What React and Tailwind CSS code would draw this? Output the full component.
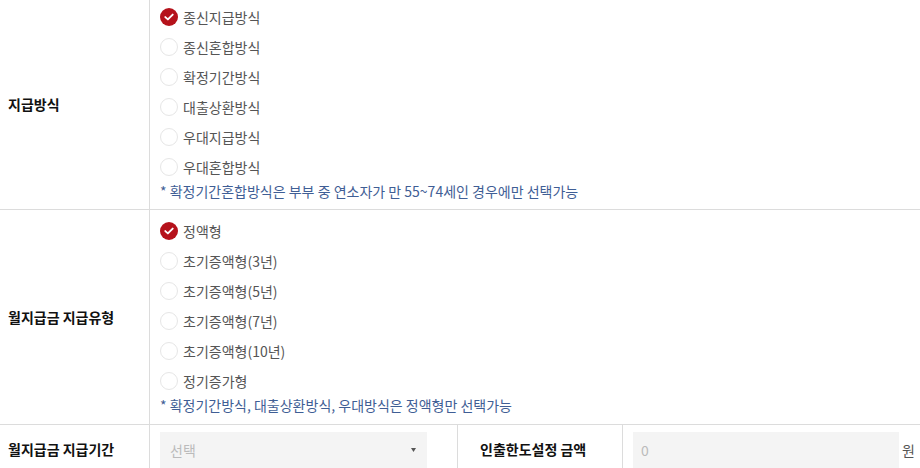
import React from 'react';

// ── Form: 지급방식 / 월지급금 ─────────────────────────────────────────────
const FONT = { fontFamily: '"Noto Sans CJK KR", "Noto Sans", sans-serif' };

const METHODS = ['종신지급방식', '종신혼합방식', '확정기간방식', '대출상환방식', '우대지급방식', '우대혼합방식'];
const TYPES = ['정액형', '초기증액형(3년)', '초기증액형(5년)', '초기증액형(7년)', '초기증액형(10년)', '정기증가형'];

function Radio({ label, checked }) {
  return (
    <label className="flex h-[30px] items-center gap-[5px] cursor-pointer">
      {checked ? (
        <span className="grid h-[18px] w-[18px] place-items-center rounded-full bg-[#b5121b]">
          <svg width="10" height="8" viewBox="0 0 10 8" fill="none">
            <path d="M1.3 4.1 L3.9 6.4 L8.7 1.6" stroke="#fff" strokeWidth="1.9" strokeLinecap="round" strokeLinejoin="round" />
          </svg>
        </span>
      ) : (
        <span className="h-[18px] w-[18px] rounded-full border border-[#e6e6e6] bg-white" />
      )}
      <span className="text-[14px] text-[#555]">{label}</span>
    </label>
  );
}

function Section({ title, items, note, className }) {
  return (
    <div className={`flex border-b border-[#dcdcdc] ${className}`}>
      <div className="flex w-[150px] shrink-0 items-center border-r border-[#dcdcdc] pl-2 text-[14px] font-bold text-[#111]">{title}</div>
      <div className="flex-1 pl-[10px]">
        {items.map((t, i) => <Radio key={t} label={t} checked={i === 0} />)}
        <p className="text-[14px] leading-[18px] text-[#3f5e95]">{note}</p>
      </div>
    </div>
  );
}

export default function App() {
  return (
    <div className="w-[920px] h-[468px] overflow-hidden bg-white" style={FONT}>
      <Section title="지급방식" items={METHODS} className="h-[210px] [&>div:last-child]:pt-[2px]"
        note="* 확정기간혼합방식은 부부 중 연소자가 만 55~74세인 경우에만 선택가능" />
      <Section title="월지급금 지급유형" items={TYPES} className="h-[215px] [&>div:last-child]:pt-[6px]"
        note="* 확정기간방식, 대출상환방식, 우대방식은 정액형만 선택가능" />

      <div className="flex h-[50px]">
        <div className="flex w-[150px] shrink-0 items-center border-r border-[#dcdcdc] pl-2 pb-[2px] text-[14px] font-bold text-[#111]">월지급금 지급기간</div>
        <div className="w-[308px] shrink-0 border-r border-[#dcdcdc] pl-[10px] pt-[7px]">
          <div className="flex h-[36px] w-[267px] items-center justify-between bg-[#f4f4f4] pl-[10px] pr-[11px]">
            <span className="text-[14px] text-[#bbb]">선택</span>
            <svg width="5" height="4" viewBox="0 0 5 4"><path d="M0 0 H5 L2.5 4 Z" fill="#555" /></svg>
          </div>
        </div>
        <div className="flex w-[165px] shrink-0 items-center border-r border-[#dcdcdc] pl-[22px] pb-[2px] text-[14px] font-bold text-[#111]">인출한도설정 금액</div>
        <div className="flex flex-1 items-start gap-[3px] pl-[10px] pt-[7px]">
          <div className="flex h-[36px] w-[266px] items-center bg-[#f4f4f4] pl-[8px] text-[14px] text-[#bbb]">0</div>
          <span className="mt-[8px] text-[14px] text-[#555]">원</span>
        </div>
      </div>
    </div>
  );
}
